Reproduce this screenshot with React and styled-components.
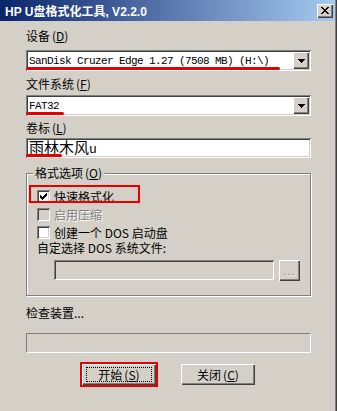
import styled, { createGlobalStyle } from 'styled-components';

const GlobalStyle = createGlobalStyle`
  html, body {
    margin: 0;
    padding: 0;
    background: #d4d0c8;
  }
  body {
    font-family: "Noto Sans CJK SC", "Liberation Sans", sans-serif;
    font-size: 12px;
    color: #000;
  }
`;

const raised = `
  background: #d4d0c8;
  box-shadow: inset 1px 1px #fff, inset -1px -1px #404040, inset -2px -2px #808080;
`;

const sunken = `
  box-shadow: inset 1px 1px #808080, inset -1px -1px #fff, inset 2px 2px #404040, inset -2px -2px #d4d0c8;
`;

const Win = styled.div`
  width: 337px;
  height: 411px;
  box-sizing: border-box;
  padding-right: 2px;
  background: #d4d0c8;
  box-shadow: inset -1px 0 #404040, inset -2px 0 #808080;
  display: flex;
  flex-direction: column;
`;

const TitleBar = styled.div`
  height: 21px;
  flex-shrink: 0;
  display: flex;
  align-items: center;
  justify-content: space-between;
  padding: 0 2px 0 5px;
  background: linear-gradient(to right, #0a246a, #a6caf0);
  color: #fff;
  font-family: "Liberation Sans", "Noto Sans CJK SC", sans-serif;
  font-weight: bold;
  font-size: 12px;
`;

const CloseBtn = styled.div`
  ${raised}
  width: 16px;
  height: 14px;
  display: flex;
  align-items: center;
  justify-content: center;
`;

const Content = styled.div`
  padding: 0 24px 0 26px;
  display: flex;
  flex-direction: column;
`;

const Label = styled.div`
  line-height: 14px;
  margin-top: ${p => p.$top}px;
`;

const Key = styled.span`
  margin-left: 2px;
`;

const Field = styled.div`
  position: relative;
  height: ${p => p.$h}px;
  margin-top: ${p => p.$top}px;
  box-sizing: border-box;
  padding: 2px;
  display: flex;
  align-items: center;
  background: ${p => (p.$disabled ? '#d4d0c8' : '#fff')};
  ${sunken}
`;

const MonoText = styled.span`
  flex: 1;
  padding-left: 1px;
  font-family: "Liberation Mono", monospace;
  font-size: 11px;
  letter-spacing: -0.6px;
`;

const BigText = styled.span`
  flex: 1;
  padding-left: 1px;
  font-size: 15px;
  line-height: 16px;

  small {
    font-family: "Liberation Mono", monospace;
    font-size: 13px;
  }
`;

const DropBtn = styled.div`
  ${raised}
  width: 16px;
  height: 17px;
  display: flex;
  align-items: center;
  justify-content: center;
`;

const RedMark = styled.div`
  position: absolute;
  left: 0;
  bottom: 1px;
  width: ${p => p.$w}px;
  height: 3px;
  background: #e80000;
  border-radius: 2px;
`;

const Group = styled.fieldset`
  margin: 8px 0 0;
  padding: 7px 10px 14px 10px;
  border: 1px solid #808080;
  box-shadow: inset 1px 1px #fff, 1px 1px #fff;
  min-width: 0;
`;

const Legend = styled.legend`
  padding: 0 2px;
  margin-left: -4px;
  line-height: 14px;
  background: #d4d0c8;
`;

const CheckRow = styled.div`
  position: relative;
  height: 18px;
  display: flex;
  align-items: center;
  gap: 4px;
  color: ${p => (p.$disabled ? '#808080' : '#000')};
  text-shadow: ${p => (p.$disabled ? '1px 1px #fff' : 'none')};

  ${p => p.$marked && `
    &::after {
      content: '';
      position: absolute;
      left: -8px;
      top: -2px;
      width: 111px;
      height: 18px;
      box-sizing: border-box;
      border: 2px solid #e80000;
    }
  `}
`;

const Box = styled.span`
  width: 13px;
  height: 13px;
  flex-shrink: 0;
  display: flex;
  align-items: center;
  justify-content: center;
  background: ${p => (p.$disabled ? '#d4d0c8' : '#fff')};
  ${sunken}
`;

const Note = styled.div`
  line-height: 14px;
`;

const PathRow = styled.div`
  display: flex;
  gap: 5px;
  margin-top: 5px;
  padding-left: 17px;
`;

const PathInput = styled(Field)`
  flex: 1;
  margin-top: 0;
`;

const BrowseBtn = styled.div`
  ${raised}
  width: 21px;
  height: 21px;
  display: flex;
  align-items: center;
  justify-content: center;
  color: #808080;
  text-shadow: 1px 1px #fff;
  font-family: "Liberation Sans", sans-serif;
  font-size: 11px;
  letter-spacing: 1px;
`;

const Status = styled.div`
  line-height: 14px;
  margin-top: 10px;
`;

const Progress = styled.div`
  height: 20px;
  margin-top: 13px;
  box-sizing: border-box;
  border: 1px solid;
  border-color: #808080 #fff #fff #808080;
`;

const ButtonRow = styled.div`
  display: flex;
  justify-content: center;
  gap: 25px;
  margin-top: 11px;
`;

const Button = styled.div`
  ${raised}
  position: relative;
  width: 74px;
  height: 21px;
  display: flex;
  align-items: center;
  justify-content: center;
  outline: ${p => (p.$marked ? '2px solid #e80000' : 'none')};

  ${p => p.$focus && `
    &::before {
      content: '';
      position: absolute;
      inset: 3px 4px;
      border: 1px dotted #000;
    }
  `}
`;

const Arrow = () => (
  <svg width="7" height="4" viewBox="0 0 7 4" shapeRendering="crispEdges">
    <path d="M0 0h7v1H0zM1 1h5v1H1zM2 2h3v1H2zM3 3h1v1H3z" fill="#000" />
  </svg>
);

const CloseIcon = () => (
  <svg width="8" height="7" viewBox="0 0 8 7" shapeRendering="crispEdges">
    <path d="M0 0h2v1H0zM6 0h2v1H6zM1 1h2v1H1zM5 1h2v1H5zM2 2h4v1H2zM3 3h2v1H3zM2 4h4v1H2zM1 5h2v1H1zM5 5h2v1H5zM0 6h2v1H0zM6 6h2v1H6z" fill="#000" />
  </svg>
);

const Check = () => (
  <svg width="7" height="7" viewBox="0 0 7 7" shapeRendering="crispEdges">
    <path d="M6 0h1v3H6zM5 1h1v3H5zM0 2h1v3H0zM1 3h1v3H1zM4 2h1v3H4zM3 3h1v3H3zM2 4h1v3H2z" fill="#000" />
  </svg>
);

export default function App() {
  return (
    <>
      <GlobalStyle />
      <Win>
        <TitleBar>
          <span>HP U盘格式化工具, V2.2.0</span>
          <CloseBtn><CloseIcon /></CloseBtn>
        </TitleBar>
        <Content>
          <Label $top={8}>设备<Key>(<u>D</u>)</Key></Label>
          <Field $h={21} $top={7}>
            <MonoText>SanDisk Cruzer Edge 1.27 (7508 MB) (H:\)</MonoText>
            <DropBtn><Arrow /></DropBtn>
            <RedMark $w={254} />
          </Field>

          <Label $top={6}>文件系统<Key>(<u>F</u>)</Key></Label>
          <Field $h={21} $top={4}>
            <MonoText>FAT32</MonoText>
            <DropBtn><Arrow /></DropBtn>
            <RedMark $w={38} />
          </Field>

          <Label $top={5}>卷标<Key>(<u>L</u>)</Key></Label>
          <Field $h={20} $top={3}>
            <BigText>雨林木风<small>u</small></BigText>
            <RedMark $w={36} />
          </Field>

          <Group>
            <Legend>格式选项<Key>(<u>O</u>)</Key></Legend>
            <CheckRow $marked>
              <Box><Check /></Box>
              <span>快速格式化</span>
            </CheckRow>
            <CheckRow $disabled>
              <Box $disabled />
              <span>启用压缩</span>
            </CheckRow>
            <CheckRow>
              <Box />
              <span>创建一个 DOS 启动盘</span>
            </CheckRow>
            <Note>自定选择 DOS 系统文件:</Note>
            <PathRow>
              <PathInput $h={20} $disabled />
              <BrowseBtn>...</BrowseBtn>
            </PathRow>
          </Group>

          <Status>检查装置...</Status>
          <Progress />

          <ButtonRow>
            <Button $marked $focus>开始<Key>(<u>S</u>)</Key></Button>
            <Button>关闭<Key>(<u>C</u>)</Key></Button>
          </ButtonRow>
        </Content>
      </Win>
    </>
  );
}
